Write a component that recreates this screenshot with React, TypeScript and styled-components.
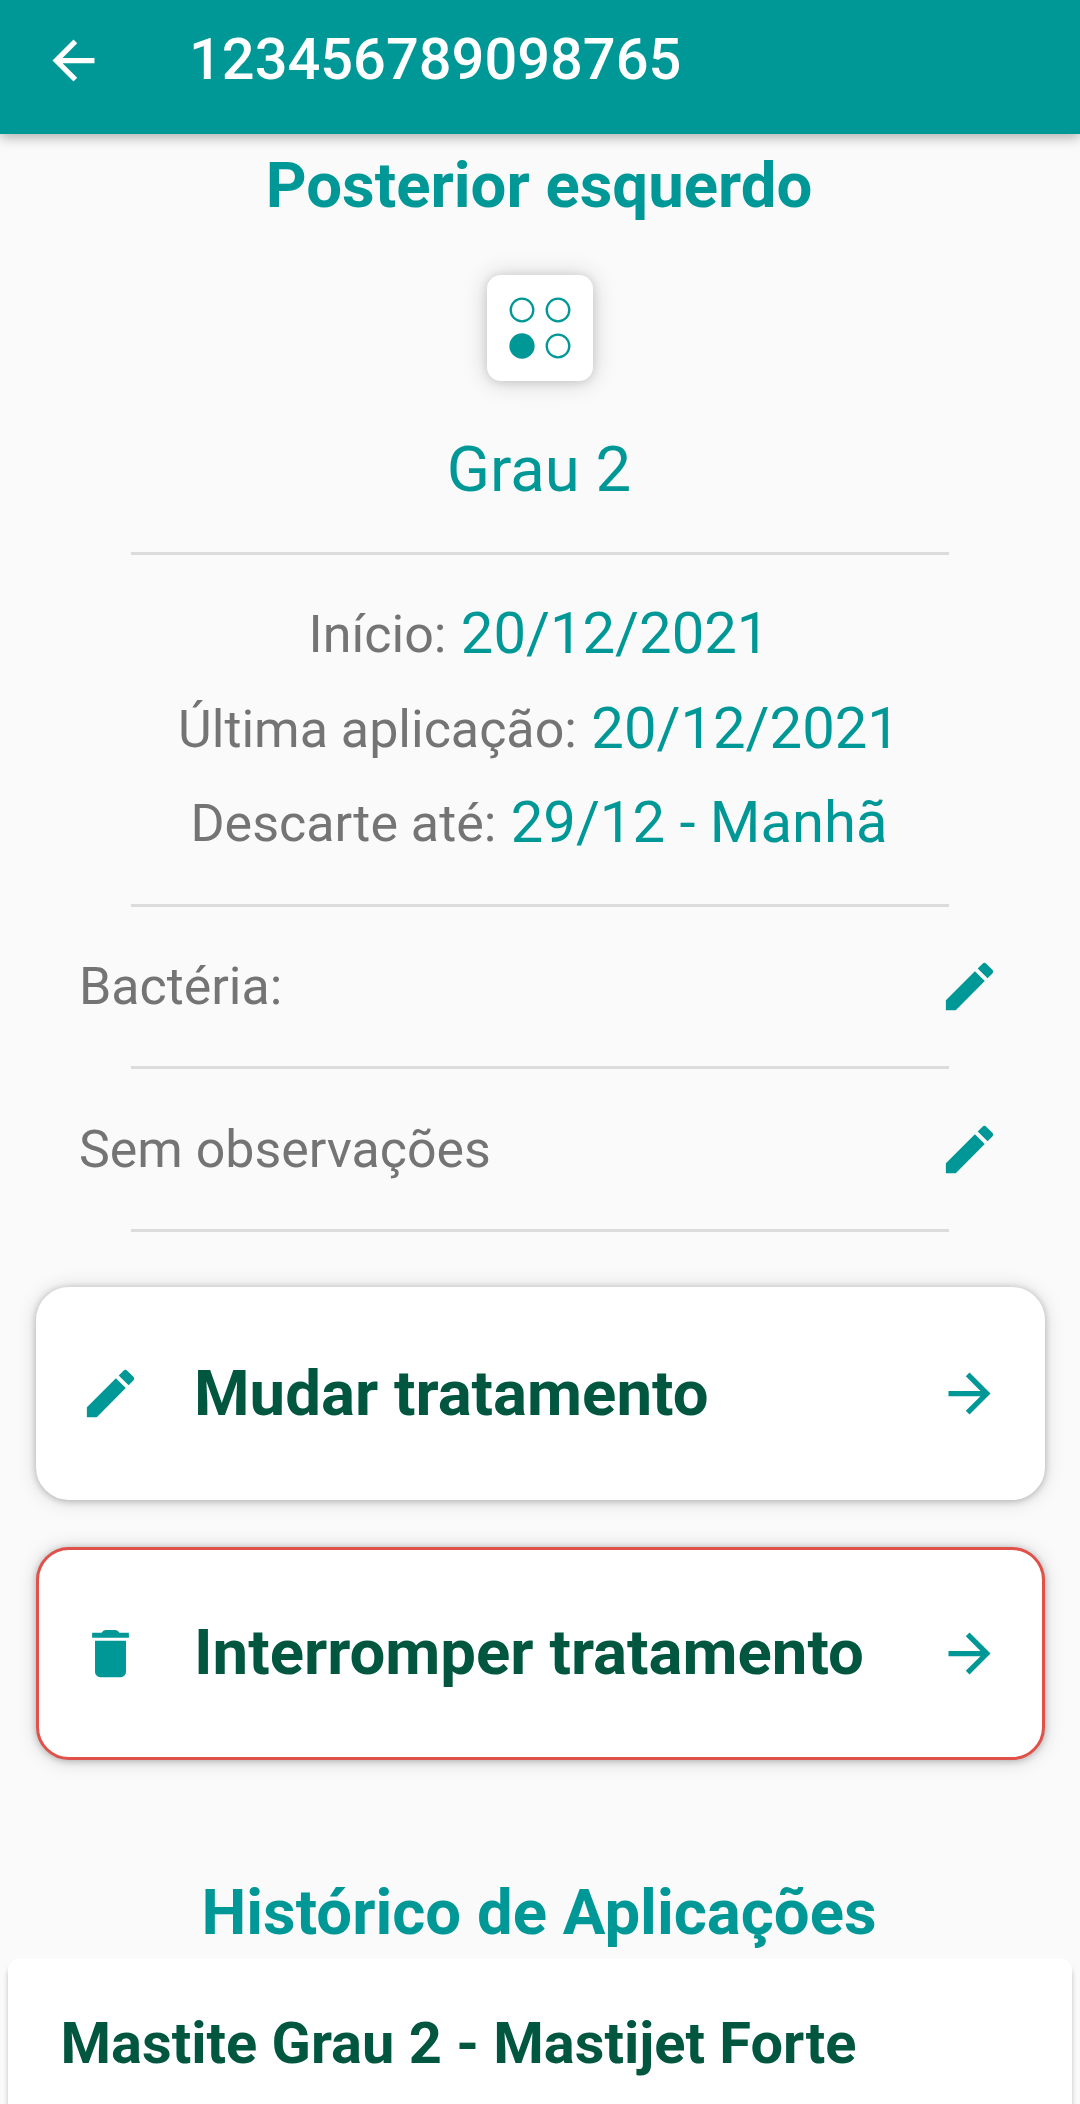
import React from "react";
import styled, { createGlobalStyle } from "styled-components";

const teal = "#009896";
const green = "#00563f";

const Global = createGlobalStyle`
  * { box-sizing: border-box; }
  body { margin: 0; background: #fafafa; font-family: Roboto, sans-serif; overflow: hidden; }
`;

const Screen = styled.div`
  height: 2104px;
  display: flex;
  flex-direction: column;
  overflow: hidden;
`;

const Bar = styled.header`
  height: 134px;
  flex: none;
  display: flex;
  align-items: center;
  padding: 0 0 13px 42px;
  background: ${teal};
  box-shadow: 0 3px 12px rgba(0, 0, 0, 0.32);
`;

const BarTitle = styled.h1`
  margin: 0 0 0 84px;
  padding-bottom: 3px;
  font-size: 57.75px;
  line-height: 66px;
  font-weight: 500;
  color: #fff;
`;

const Heading = styled.h2<{ $top: number }>`
  margin: ${p => p.$top}px 0 0;
  padding-right: 2px;
  font-size: 63.5px;
  line-height: 74px;
  font-weight: 700;
  color: ${teal};
  text-align: center;
`;

const Quarter = styled.div`
  width: 106px;
  height: 106px;
  flex: none;
  margin: 52px auto 0;
  border-radius: 14px;
  background: #fff;
  box-shadow: 0 1px 24px rgba(0, 0, 0, 0.18), 0 1px 10px rgba(0, 0, 0, 0.12);
  display: grid;
  place-items: center;
`;

const Grade = styled.div`
  margin-top: 52px;
  padding-right: 2px;
  font-size: 63.5px;
  line-height: 74px;
  color: ${teal};
  text-align: center;
`;

const Rule = styled.hr<{ $top?: number }>`
  width: 818px;
  height: 3px;
  flex: none;
  border: 0;
  background: #dcdcdc;
  margin: ${p => p.$top ?? 0}px auto 0;
`;

const Facts = styled.div`
  display: flex;
  flex-direction: column;
  margin-top: 30.4px;
  padding-right: 2px;
`;

const Fact = styled.div`
  height: 94.5px;
  line-height: 94px;
  text-align: center;
  font-size: 52px;
  color: #747474;
  white-space: pre;
`;

const Value = styled.span`
  position: relative;
  top: 1px;
  font-size: 58px;
  color: ${teal};
`;

const EditRow = styled.div`
  height: 159.4px;
  flex: none;
  display: flex;
  align-items: center;
  justify-content: space-between;
  padding: 0 79px;
  font-size: 51.9px;
  color: #747474;
`;

const Action = styled.button<{ $danger?: boolean; $top: number }>`
  margin: ${p => p.$top}px 35px 0 36px;
  height: 213px;
  flex: none;
  display: grid;
  grid-template-columns: 115px 1fr 63px;
  align-items: center;
  padding: 0 41px 0 40px;
  border: 3px solid ${p => (p.$danger ? "#df5149" : "#fff")};
  border-radius: 33px;
  background: #fff;
  box-shadow: 0 1px 20px rgba(0, 0, 0, 0.15), 0 1px 7px rgba(0, 0, 0, 0.24);
  text-align: left;
  font: 700 63.5px/74px Roboto, sans-serif;
  color: ${green};
`;

const ActionLabel = styled.span<{ $drop?: number }>`
  padding-top: ${p => p.$drop ?? 0}px;
`;

const History = styled.section`
  margin: 9px 8px 0;
  flex: 1;
  padding: 51px 52.5px;
  border-radius: 11px 11px 0 0;
  background: #fff;
  box-shadow: 0 6px 5px rgba(0, 0, 0, 0.24);
  font-size: 57.75px;
  line-height: 66px;
  font-weight: 700;
  color: ${green};
`;

const Glyph = styled.svg`
  display: block;
  flex: none;
  width: 63px;
  height: 63px;
`;

const paths = {
  back: "M20 11H7.83l5.59-5.59L12 4l-8 8 8 8 1.41-1.41L7.83 13H20v-2z",
  next: "M12 4l-1.41 1.41L16.17 11H4v2h12.17l-5.58 5.59L12 20l8-8z",
  edit: "M3 17.25V21h3.75L17.81 9.94l-3.75-3.75L3 17.25zM20.71 7.04c.39-.39.39-1.02 0-1.41l-2.34-2.34c-.39-.39-1.02-.39-1.41 0l-1.83 1.83 3.75 3.75 1.83-1.83z",
  trash:
    "M6.1 19a2 2 0 0 0 2 2h7.8a2 2 0 0 0 2-2V7.1H6.1zM5 4.1h3.6q.5-1.1 1.6-1.1h3.6q1.1 0 1.6 1.1H19V6H5z",
};

const Icon = ({ name, color = teal }: { name: keyof typeof paths; color?: string }) => (
  <Glyph viewBox="0 0 24 24" fill={color}>
    <path d={paths[name]} />
  </Glyph>
);

export default function App() {
  return (
    <Screen>
      <Global />
      <Bar>
        <Icon name="back" color="#fff" />
        <BarTitle>123456789098765</BarTitle>
      </Bar>
      <Heading $top={15}>Posterior esquerdo</Heading>
      <Quarter>
        <svg width="64" height="64" viewBox="0 0 64 64" fill="none" stroke={teal} strokeWidth="2.3">
          <circle cx="14" cy="14" r="11.3" />
          <circle cx="50" cy="14" r="11.3" />
          <circle cx="14" cy="50" r="11.5" fill={teal} />
          <circle cx="50" cy="50" r="11.3" />
        </svg>
      </Quarter>
      <Grade>Grau 2</Grade>
      <Rule $top={45} />
      <Facts>
        <Fact>Início:<Value> 20/12/2021</Value></Fact>
        <Fact>Última aplicação:<Value> 20/12/2021</Value></Fact>
        <Fact>Descarte até:<Value> 29/12 - Manhã</Value></Fact>
      </Facts>
      <Rule $top={35.1} />
      <EditRow>Bactéria:<Icon name="edit" /></EditRow>
      <Rule />
      <EditRow>Sem observações<Icon name="edit" /></EditRow>
      <Rule />
      <Action $top={55.2}>
        <Icon name="edit" />
        <ActionLabel $drop={2}>Mudar tratamento</ActionLabel>
        <Icon name="next" />
      </Action>
      <Action $top={47} $danger>
        <Icon name="trash" />
        <ActionLabel>Interromper tratamento</ActionLabel>
        <Icon name="next" />
      </Action>
      <Heading $top={116}>Histórico de Aplicações</Heading>
      <History>Mastite Grau 2 - Mastijet Forte</History>
    </Screen>
  );
}
